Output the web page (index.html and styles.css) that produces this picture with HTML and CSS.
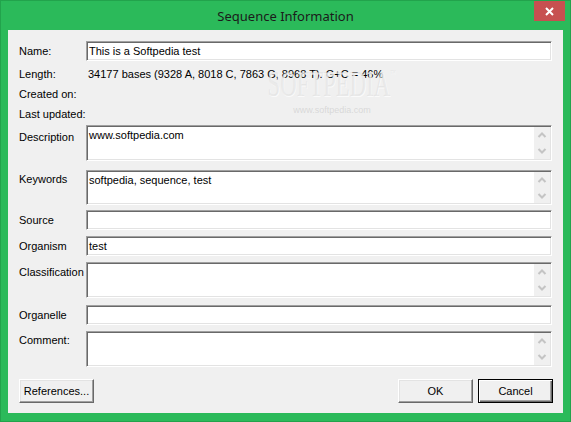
FILE: index.html
```html
<!DOCTYPE html>
<html lang="en">
<head>
    <meta charset="UTF-8">
    <title>Sequence Information</title>
    <link rel="stylesheet" href="styles.css">
</head>
<body>

    <div class="window">
        <!-- Barra de título -->
        <div class="titlebar">
            <span class="title">Sequence Information</span>
            <button class="close-button" aria-label="Close">
                <svg width="9" height="9" viewBox="0 0 9 9">
                    <path d="M1 1 L8 8 M8 1 L1 8" stroke="#fff" stroke-width="2" fill="none"/>
                </svg>
            </button>
        </div>

        <!-- Área do diálogo -->
        <div class="client">
            <div class="form">
                <div class="row single">
                    <span class="label">Name:</span>
                    <div class="edit">This is a Softpedia test</div>
                </div>
                <div class="row info top-3">
                    <span class="label">Length:</span>
                    <span class="value">34177 bases (9328 A, 8018 C, 7863 G, 8968 T). G+C = 46%</span>
                </div>
                <div class="row info">
                    <span class="label">Created on:</span>
                    <span class="value"></span>
                </div>
                <div class="row info">
                    <span class="label">Last updated:</span>
                    <span class="value"></span>
                </div>
                <div class="row multi top-1 low">
                    <span class="label">Description</span>
                    <div class="edit memo">
                        <div class="memo-text">www.softpedia.com</div>
                        <div class="scrollbar">
                            <svg width="16" height="32" viewBox="0 0 16 32">
                                <path d="M4.5 10 L8 6.5 L11.5 10 M4.5 22 L8 25.5 L11.5 22" stroke="#c4c4c4" stroke-width="2" fill="none"/>
                            </svg>
                        </div>
                    </div>
                </div>
                <div class="row multi top-9 short high">
                    <span class="label">Keywords</span>
                    <div class="edit memo">
                        <div class="memo-text">softpedia, sequence, test</div>
                        <div class="scrollbar">
                            <svg width="16" height="31" viewBox="0 0 16 31">
                                <path d="M4.5 10 L8 6.5 L11.5 10 M4.5 22 L8 25.5 L11.5 22" stroke="#c4c4c4" stroke-width="2" fill="none"/>
                            </svg>
                        </div>
                    </div>
                </div>
                <div class="row single top-5">
                    <span class="label">Source</span>
                    <div class="edit"></div>
                </div>
                <div class="row single top-6">
                    <span class="label">Organism</span>
                    <div class="edit">test</div>
                </div>
                <div class="row multi top-6">
                    <span class="label">Classification</span>
                    <div class="edit memo">
                        <div class="memo-text"></div>
                        <div class="scrollbar">
                            <svg width="16" height="32" viewBox="0 0 16 32">
                                <path d="M4.5 10 L8 6.5 L11.5 10 M4.5 22 L8 25.5 L11.5 22" stroke="#c4c4c4" stroke-width="2" fill="none"/>
                            </svg>
                        </div>
                    </div>
                </div>
                <div class="row single top-7">
                    <span class="label">Organelle</span>
                    <div class="edit"></div>
                </div>
                <div class="row multi top-6 high">
                    <span class="label">Comment:</span>
                    <div class="edit memo">
                        <div class="memo-text"></div>
                        <div class="scrollbar">
                            <svg width="16" height="32" viewBox="0 0 16 32">
                                <path d="M4.5 10 L8 6.5 L11.5 10 M4.5 22 L8 25.5 L11.5 22" stroke="#c4c4c4" stroke-width="2" fill="none"/>
                            </svg>
                        </div>
                    </div>
                </div>
            </div>

            <!-- Botões -->
            <div class="buttons">
                <button class="push-button">References...</button>
                <div class="right-buttons">
                    <button class="push-button">OK</button>
                    <button class="push-button default">Cancel</button>
                </div>
            </div>

            <!-- Marca d'água -->
            <div class="watermark">
                <span class="wm-logo">SOFTPEDIA<sup>™</sup></span>
                <span class="wm-url">www.softpedia.com</span>
            </div>
        </div>
    </div>

</body>
</html>
```

FILE: styles.css
```css
body {
    margin: 0;
    padding: 0;
    font-family: "Liberation Sans", Arial, sans-serif;
    font-size: 11px;
    color: #000;
}

.window {
    width: 571px;
    height: 422px;
    box-sizing: border-box;
    background-color: #2bba5a;
    border: 1px solid #22a34c;
    display: flex;
    flex-direction: column;
}

/* Barra de título */
.titlebar {
    height: 29px;
    display: grid;
    grid-template-columns: 1fr auto 1fr;
    align-items: center;
}

.title {
    grid-column: 2;
    font-family: "Noto Sans", "Open Sans", sans-serif;
    font-size: 13px;
    color: #1b1b1b;
    padding-top: 1px;
}

.close-button {
    grid-column: 3;
    justify-self: end;
    align-self: start;
    width: 31px;
    height: 20px;
    margin-right: 5px;
    border: none;
    padding: 0;
    background-color: #c75050;
    display: flex;
    align-items: center;
    justify-content: center;
}

/* Área cliente */
.client {
    position: relative;
    width: 555px;
    height: 383px;
    margin: 0 7px;
    box-sizing: border-box;
    background-color: #f0f0f0;
    padding: 11px 11px 0 11px;
}

.form {
    display: flex;
    flex-direction: column;
}

.row {
    display: flex;
}

.label {
    width: 67px;
    flex-shrink: 0;
    white-space: nowrap;
}

.row.single {
    height: 20px;
    align-items: center;
}

.row.info {
    height: 20px;
    align-items: center;
}

.row.info .value {
    padding-left: 2px;
}

.row.multi {
    height: 36px;
}

.row.multi.short {
    height: 35px;
}

.row.multi .label {
    padding-top: 4px;
}

.row.multi.low .label {
    padding-top: 6px;
}

.row.multi.high .label {
    padding-top: 3px;
}

.top-1 { margin-top: 1px; }
.top-3 { margin-top: 3px; }
.top-5 { margin-top: 5px; }
.top-6 { margin-top: 6px; }
.top-7 { margin-top: 7px; }
.top-9 { margin-top: 9px; }

/* Campo de edição afundado */
.edit {
    width: 466px;
    height: 100%;
    box-sizing: border-box;
    background-color: #fff;
    border-top: 1px solid #a0a0a0;
    border-left: 1px solid #a0a0a0;
    border-right: 1px solid #fff;
    border-bottom: 1px solid #fff;
    box-shadow: inset 1px 1px 0 #696969, inset -1px -1px 0 #e3e3e3;
    padding: 0 2px;
    display: flex;
    align-items: center;
}

.edit.memo {
    align-items: stretch;
    padding: 1px 1px 1px 2px;
}

.memo-text {
    flex-grow: 1;
    padding-top: 2px;
}

.scrollbar {
    width: 16px;
    background-color: #f0f0f0;
    display: flex;
    align-items: center;
}

/* Botões */
.buttons {
    display: flex;
    justify-content: space-between;
    margin-top: 12px;
    margin-right: -1px;
}

.right-buttons {
    display: flex;
    gap: 5px;
}

.push-button {
    width: 75px;
    height: 24px;
    box-sizing: border-box;
    font-family: "Liberation Sans", Arial, sans-serif;
    font-size: 11px;
    color: #000;
    background-color: #f0f0f0;
    border-top: 1px solid #fff;
    border-left: 1px solid #fff;
    border-right: 1px solid #696969;
    border-bottom: 1px solid #696969;
    box-shadow: inset -1px -1px 0 #a0a0a0, inset 1px 1px 0 #e3e3e3;
    padding: 0;
}

.push-button.default {
    border: 1px solid #000;
    box-shadow: inset 1px 1px 0 #fff, inset -1px -1px 0 #696969, inset -2px -2px 0 #a0a0a0;
}

/* Marca d'água */
.watermark {
    position: absolute;
    left: 262px;
    top: 26px;
    width: 124px;
    display: flex;
    flex-direction: column;
    align-items: center;
    pointer-events: none;
}

.wm-logo {
    font-family: "Liberation Serif", serif;
    font-size: 35px;
    line-height: 35px;
    transform: scaleX(0.65);
    color: rgba(220, 220, 220, 0.55);
    text-shadow: 1px 1px 0 rgba(255, 255, 255, 0.7);
    white-space: nowrap;
}

.wm-logo sup {
    font-size: 9px;
    vertical-align: 20px;
}

.wm-url {
    font-size: 9px;
    color: rgba(200, 200, 200, 0.6);
    margin-top: 3px;
    white-space: nowrap;
}
```
